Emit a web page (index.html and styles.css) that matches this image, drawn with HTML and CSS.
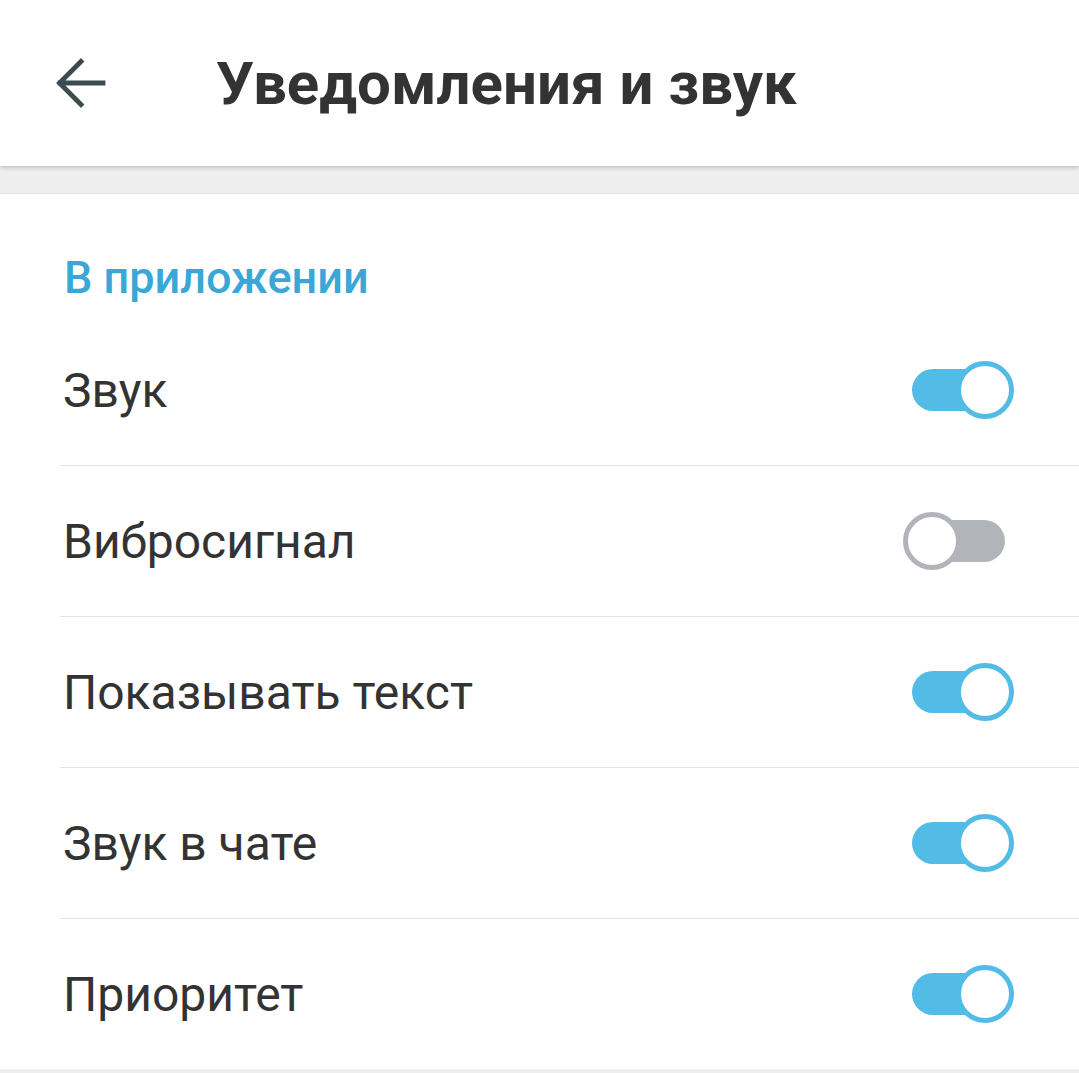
FILE: index.html
```html
<!DOCTYPE html>
<html lang="ru">
<head>
    <meta charset="UTF-8">
    <meta name="viewport" content="width=device-width, initial-scale=1.0">
    <title>Уведомления и звук</title>
    <link rel="stylesheet" href="styles.css">
</head>
<body>
    <header class="toolbar">
        <button class="back-btn" aria-label="Назад">
            <svg width="50" height="50" viewBox="0 0 50 50">
                <path d="M47 25 H4 M25 3.5 L3.5 25 L25 46.5" fill="none" stroke="#3a4c4f" stroke-width="4.8" stroke-linecap="square"/>
            </svg>
        </button>
        <h1 class="toolbar-title">Уведомления и звук</h1>
    </header>

    <div class="spacer"></div>

    <section class="settings">
        <h2 class="settings-title">В приложении</h2>

        <div class="setting-row">
            <span class="setting-label">Звук</span>
            <span class="toggle on"></span>
        </div>
        <div class="setting-row">
            <span class="setting-label">Вибросигнал</span>
            <span class="toggle"></span>
        </div>
        <div class="setting-row">
            <span class="setting-label">Показывать текст</span>
            <span class="toggle on"></span>
        </div>
        <div class="setting-row">
            <span class="setting-label">Звук в чате</span>
            <span class="toggle on"></span>
        </div>
        <div class="setting-row">
            <span class="setting-label">Приоритет</span>
            <span class="toggle on"></span>
        </div>
    </section>
</body>
</html>
```

FILE: styles.css
```css
body {
    margin: 0;
    background-color: #eeeeee;
    font-family: Roboto, "Noto Sans", sans-serif;
    color: #333333;
    overflow: hidden;
}

.toolbar {
    position: relative;
    z-index: 1;
    display: flex;
    align-items: center;
    height: 166px;
    background-color: #ffffff;
    box-shadow: 0 2px 4px rgba(0, 0, 0, 0.18);
}

.back-btn {
    display: flex;
    margin: 0 0 0 56px;
    padding: 0;
    border: none;
    background: none;
}

.toolbar-title {
    margin: 0 0 0 110px;
    font-size: 60px;
    font-weight: 700;
    color: #333333;
}

.spacer {
    height: 27px;
    border-bottom: 1px solid #e2e2e2;
}

.settings {
    background-color: #ffffff;
    padding-left: 60px;
    margin-bottom: 4px;
}

.settings-title {
    margin: 0;
    height: 121px;
    padding: 58px 0 0 4px;
    box-sizing: border-box;
    font-size: 45px;
    font-weight: 500;
    color: #3aa7d7;
    line-height: 52px;
}

.setting-row {
    display: flex;
    align-items: center;
    justify-content: space-between;
    height: 150px;
    padding: 0 74px 0 3px;
}

.setting-row + .setting-row {
    border-top: 1px solid #e4e4e4;
}

.setting-label {
    font-size: 48px;
}

/* switch: track with an overhanging thumb */
.toggle {
    position: relative;
    width: 93px;
    height: 42px;
    border-radius: 21px;
    background-color: #b1b5b9;
}

.toggle::after {
    content: "";
    position: absolute;
    top: -8px;
    left: -9px;
    width: 48px;
    height: 48px;
    border: 5px solid #b1b5b9;
    border-radius: 50%;
    background-color: #ffffff;
}

.toggle.on {
    background-color: #52bbe6;
}

.toggle.on::after {
    left: auto;
    right: -9px;
    border-color: #52bbe6;
}
```
